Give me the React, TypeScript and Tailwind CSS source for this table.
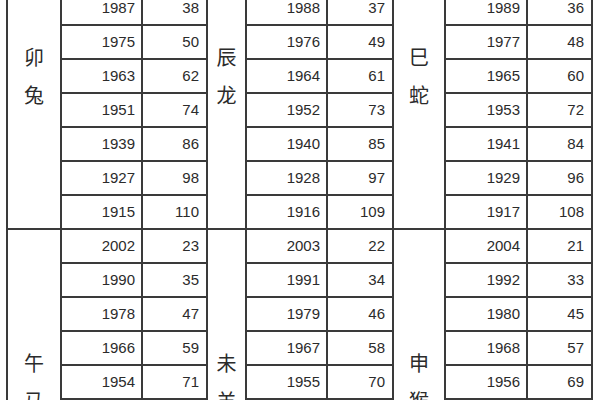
const groups = [
  {
    row: 0,
    items: [
      { name: ["卯", "兔"], years: [2011, 1999, 1987, 1975, 1963, 1951, 1939, 1927, 1915] },
      { name: ["辰", "龙"], years: [2012, 2000, 1988, 1976, 1964, 1952, 1940, 1928, 1916] },
      { name: ["巳", "蛇"], years: [2013, 2001, 1989, 1977, 1965, 1953, 1941, 1929, 1917] },
    ],
  },
  {
    row: 1,
    items: [
      { name: ["午", "马"], years: [2002, 1990, 1978, 1966, 1954, 1942, 1930, 1918, 1906] },
      { name: ["未", "羊"], years: [2003, 1991, 1979, 1967, 1955, 1943, 1931, 1919, 1907] },
      { name: ["申", "猴"], years: [2004, 1992, 1980, 1968, 1956, 1944, 1932, 1920, 1908] },
    ],
  },
];

const age = (y: number) => 2025 - y;

export default function App() {
  return (
    <div className="h-[400px] w-[600px] overflow-hidden bg-white">
      <div
        className="mt-[-78px] ml-[6px] grid w-[587px] grid-cols-[52px_79px_63px_37px_79px_64px_50px_80px_63px] auto-rows-[32px] gap-[2px] bg-[#3a3a3a] p-[2px] text-[#2b2b2b]"
        style={{ fontFamily: '"Liberation Sans", "Noto Sans CJK SC", sans-serif' }}
      >
        {groups.map((g) =>
          Array.from({ length: 9 }).map((_, i) =>
            g.items.map((z, zi) => {
              const y = z.years[i];
              return [
                i === 0 ? (
                  <div
                    key={`${g.row}-${zi}-name`}
                    className="row-span-9 flex flex-col items-center justify-center bg-white text-[20px] leading-[38px]"
                    style={{ fontFamily: '"Noto Sans CJK SC", sans-serif' }}
                  >
                    <span>{z.name[0]}</span>
                    <span>{z.name[1]}</span>
                  </div>
                ) : null,
                <div
                  key={`${g.row}-${zi}-${i}-y`}
                  className="flex items-center justify-end bg-white pr-[6px] text-[15px]"
                >
                  {y}
                </div>,
                <div
                  key={`${g.row}-${zi}-${i}-a`}
                  className="flex items-center justify-end bg-white pr-[7px] text-[15px]"
                >
                  {age(y)}
                </div>,
              ];
            })
          )
        )}
      </div>
    </div>
  );
}
